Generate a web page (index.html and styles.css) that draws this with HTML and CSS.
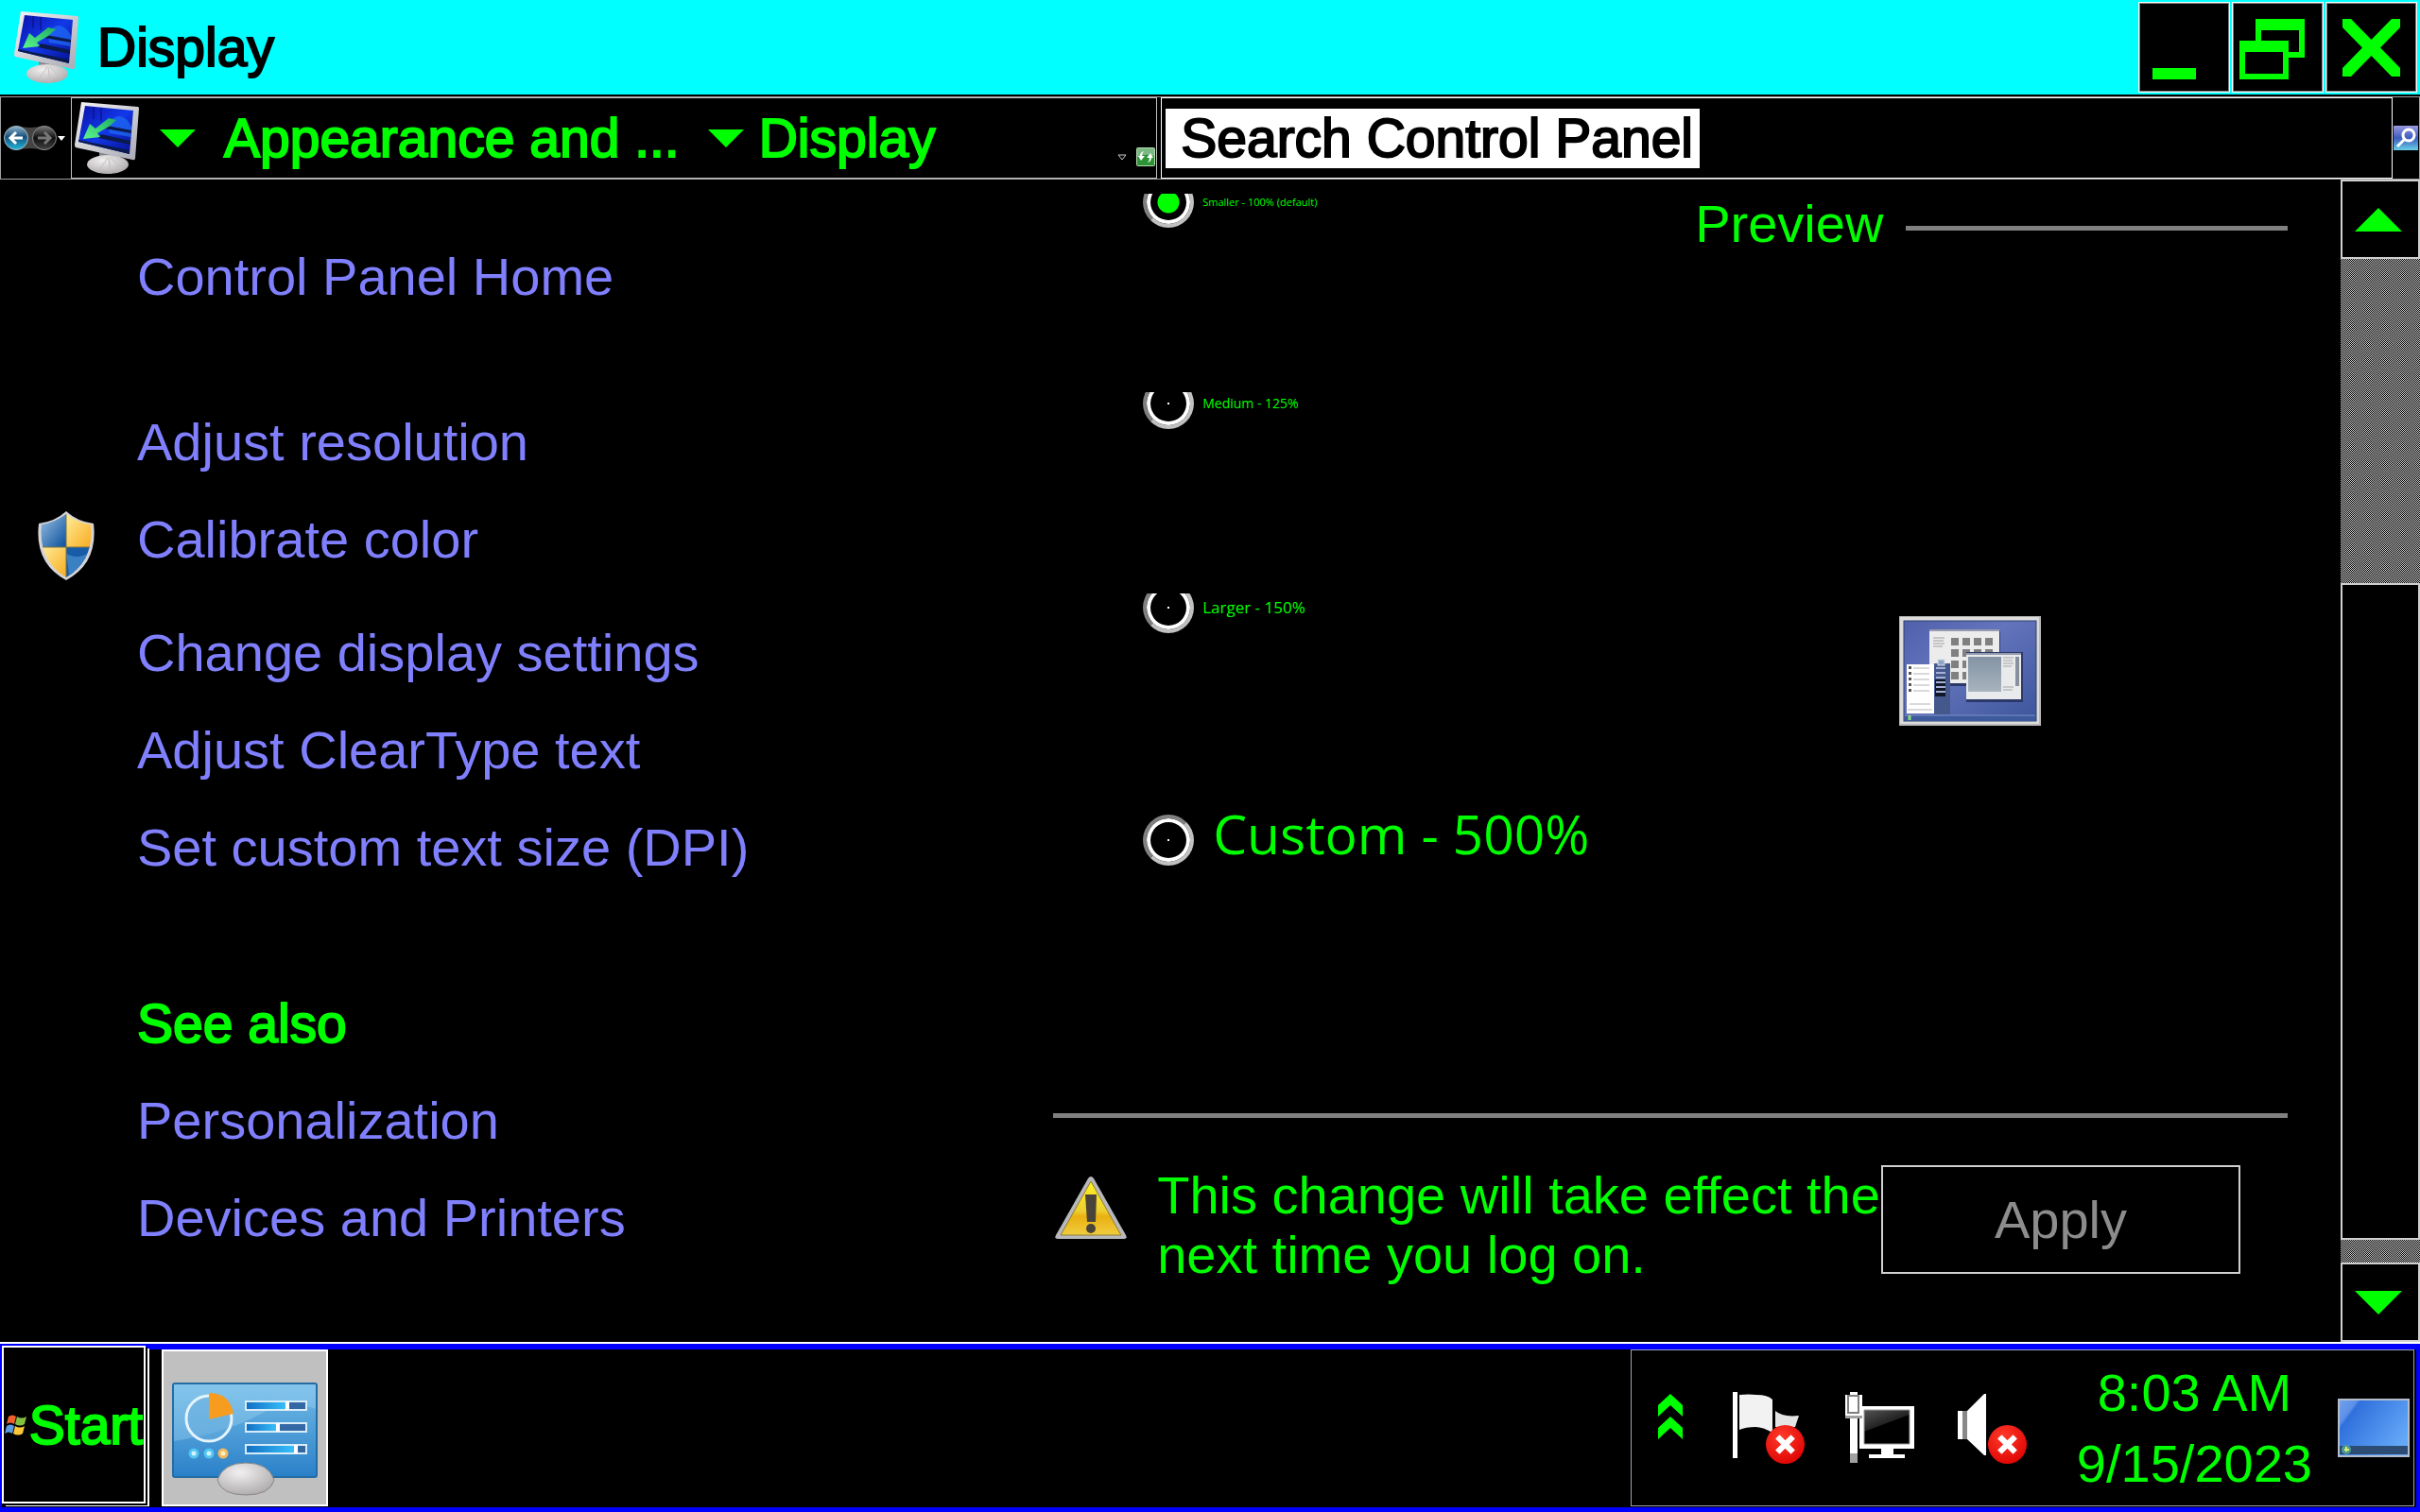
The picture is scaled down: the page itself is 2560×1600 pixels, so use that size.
FILE: index.html
```html
<!DOCTYPE html>
<html lang="en">
  <head>
    <meta charset="UTF-8" />
    <meta name="viewport" content="width=device-width, initial-scale=1.0" />
    <title>Display</title>
    <link rel="stylesheet" href="styles.css">
  </head>
  <body>
    <svg class="sprite" width="0" height="0" aria-hidden="true">
      <defs>
        <linearGradient id="frame" x1="0" y1="0" x2="1" y2="1">
          <stop offset="0" stop-color="#f4f4f6" />
          <stop offset="1" stop-color="#a9a9b4" />
        </linearGradient>
        <linearGradient id="screen" x1="0" y1="0" x2="1" y2="1">
          <stop offset="0" stop-color="#0a12a8" />
          <stop offset="0.5" stop-color="#1238e8" />
          <stop offset="1" stop-color="#06108c" />
        </linearGradient>
        <linearGradient id="arrow" x1="1" y1="0" x2="0" y2="1">
          <stop offset="0" stop-color="#1fae62" />
          <stop offset="1" stop-color="#5cf58c" />
        </linearGradient>
        <radialGradient id="stand" cx="0.4" cy="0.3" r="0.8">
          <stop offset="0" stop-color="#f2f0f0" />
          <stop offset="1" stop-color="#a8a4a6" />
        </radialGradient>
        <radialGradient id="red" cx="0.4" cy="0.3" r="0.8">
          <stop offset="0" stop-color="#ff3a2a" />
          <stop offset="1" stop-color="#dc0000" />
        </radialGradient>
      </defs>
      <symbol id="monitor" viewBox="0 0 68 78">
        <path d="M26 54h20l2 8H26z" fill="#85858e" />
        <ellipse cx="35" cy="67" rx="22" ry="10" fill="url(#stand)" />
        <path d="M35 60l-10 14M36 60l2 17M38 60l12 12" stroke="#c4bfc0" stroke-width="1" />
        <path d="M7 1L67 6Q68 6 68 8L64 61Q63 63 61 62L1 49Q0 48 0 46z" fill="url(#frame)" />
        <path d="M11 5L62 10L58 56L4 43z" fill="url(#screen)" />
        <path d="M36 28q2-12 12-12 9 2 12 12l-1 10-22-4z" fill="#1f6cf5" opacity="0.7" />
        <path d="M34 26l26 5v3l-28-5zM28 35l31 7v4l-34-7zM4 41l54 11v4L4 43z" fill="#0a1a4a" />
        <path d="M20 6v13M28 7v14" stroke="#080c70" stroke-width="1" />
        <path d="M44 20L36 18 22 29 16 24 9 40 27 38 24 34 36 27z" fill="url(#arrow)" />
      </symbol>
      <symbol id="error" viewBox="0 0 40 40">
        <circle cx="20" cy="20" r="20" fill="url(#red)" />
        <path d="M12 12l16 16M28 12L12 28" stroke="#fff" stroke-width="6" />
      </symbol>
      <symbol id="down" viewBox="0 0 38 19">
        <path d="M0 0h38L19 19z" fill="#00ff00" />
      </symbol>
    </svg>

    <header class="titlebar">
      <svg class="monitor"><use href="#monitor" /></svg>
      <h1 class="heavy">Display</h1>
      <div class="controls">
        <button aria-label="Minimize">
          <svg width="68" height="68" viewBox="0 0 68 68"><path d="M0 56h46v12H0z" fill="#00ff00" /></svg>
        </button>
        <button aria-label="Restore">
          <svg width="82" height="68" viewBox="0 0 82 68">
            <path d="M17 4h52v41H46v-6h17V16H23v12h-6z" fill="#00ff00" />
            <path d="M0 27h52v41H0zM6 39v23h40V39z" fill="#00ff00" fill-rule="evenodd" />
          </svg>
        </button>
        <button aria-label="Close">
          <svg width="61" height="61" viewBox="0 0 61 61">
            <path d="M0 0h9l21.500 22L52 0h9v9L40 30.500 61 52v9h-9L30.500 39 9 61H0v-9l21-21.500L0 9z" fill="#00ff00" />
          </svg>
        </button>
      </div>
    </header>

    <nav class="toolbar">
      <div class="travel">
        <button aria-label="Back and forward">
          <svg width="66" height="28" viewBox="0 0 66 28">
            <defs>
              <linearGradient id="back" x1="0" y1="0" x2="0" y2="1">
                <stop offset="0" stop-color="#8fb4cc" />
                <stop offset="0.45" stop-color="#16507c" />
                <stop offset="1" stop-color="#22b8dc" />
              </linearGradient>
              <linearGradient id="forward" x1="0" y1="0" x2="0" y2="1">
                <stop offset="0" stop-color="#777" />
                <stop offset="0.5" stop-color="#111" />
                <stop offset="1" stop-color="#444" />
              </linearGradient>
            </defs>
            <path d="M14 1q14 4 28 0a13 13 0 0 1 0 26q-14-4-28 0z" fill="#444" />
            <circle cx="13" cy="14" r="12.500" fill="url(#back)" stroke="#aebcc6" />
            <circle cx="43" cy="14" r="12.500" fill="url(#forward)" stroke="#888" />
            <path d="M20 14H7M13 8l-6 6 6 6" fill="none" stroke="#fff" stroke-width="3" />
            <path d="M36 14h13M43 8l6 6-6 6" fill="none" stroke="#777" stroke-width="3" />
            <path d="M57 12h8l-4 5z" fill="#fff" />
          </svg>
        </button>
      </div>
      <div class="address">
        <svg class="monitor"><use href="#monitor" /></svg>
        <svg class="arrow"><use href="#down" /></svg>
        <a class="heavy" href="#">Appearance and ...</a>
        <svg class="arrow"><use href="#down" /></svg>
        <a class="heavy" href="#">Display</a>
        <div class="tools">
          <button aria-label="Previous locations">
            <svg width="10" height="7" viewBox="0 0 10 7"><path d="M1 1h8L5 6z" fill="none" stroke="#ccc" /></svg>
          </button>
          <button aria-label="Refresh">
            <svg width="20" height="20" viewBox="0 0 20 20">
              <rect x="0.500" y="0.500" width="19" height="19" rx="1" fill="#2c9434" stroke="#b4dcb0" />
              <path d="M1 1h18v8q-9-3-18 1z" fill="#7cb884" />
              <path d="M8 4q-2 2-2 5h3l-4 5-3-5h2q0-4 4-5zM12 16q2-2 2-5h-3l4-5 3 5h-2q0 4-4 5z" fill="#fff" />
            </svg>
          </button>
        </div>
      </div>
      <form class="search">
        <input class="heavy" type="text" value="Search Control Panel" aria-label="Search Control Panel" spellcheck="false" />
      </form>
      <button class="find" aria-label="Search">
        <svg width="26" height="26" viewBox="0 0 26 26">
          <defs>
            <linearGradient id="glass" x1="0" y1="0" x2="0" y2="1">
              <stop offset="0" stop-color="#9a9ae0" />
              <stop offset="0.5" stop-color="#3c5cc0" />
              <stop offset="1" stop-color="#68d0e8" />
            </linearGradient>
          </defs>
          <rect width="26" height="26" fill="url(#glass)" />
          <circle cx="16" cy="10" r="6" fill="none" stroke="#fff" stroke-width="3" />
          <path d="M12 14l-8 8" stroke="#fff" stroke-width="3" />
        </svg>
      </button>
    </nav>

    <main class="window">
      <aside class="sidebar">
        <a class="home" href="#">Control Panel Home</a>
        <a href="#">Adjust resolution</a>
        <a class="admin" href="#">
          <svg class="shield" width="60" height="74" viewBox="0 0 60 74">
            <defs>
              <clipPath id="shield">
                <path d="M30 3Q42 12 56 14Q60 52 30 70Q0 52 4 14Q18 12 30 3z" />
              </clipPath>
              <linearGradient id="blue" x1="0" y1="0" x2="1" y2="1">
                <stop offset="0" stop-color="#a8cdea" />
                <stop offset="1" stop-color="#0b4f9c" />
              </linearGradient>
              <linearGradient id="gold" x1="0" y1="0" x2="1" y2="1">
                <stop offset="0" stop-color="#fff0a0" />
                <stop offset="1" stop-color="#f8a818" />
              </linearGradient>
            </defs>
            <path d="M30 0Q42 11 59 13Q64 55 30 73Q-4 55 1 13Q18 11 30 0z" fill="#d4d4d8" />
            <g clip-path="url(#shield)">
              <path d="M0 0h30v38H0z" fill="url(#blue)" />
              <path d="M30 0h30v38H30z" fill="url(#gold)" />
              <path d="M0 38h30v36H0z" fill="url(#gold)" />
              <path d="M30 38h30v36H30z" fill="#185ca8" />
              <path d="M30 45q14 8 28-4v12L34 72z" fill="#3c80c4" />
              <path d="M30 0v74M0 38h60" stroke="#7a7440" stroke-width="1" />
            </g>
          </svg>
          Calibrate color
        </a>
        <a href="#">Change display settings</a>
        <a href="#">Adjust ClearType text</a>
        <a href="#">Set custom text size (DPI)</a>
        <h2 class="heavy">See also</h2>
        <a href="#">Personalization</a>
        <a href="#">Devices and Printers</a>
      </aside>

      <section class="panel">
        <div class="settings">
          <div class="options">
            <label class="option smaller">
              <input type="radio" name="size" checked />
              <span>Smaller - 100% (default)</span>
            </label>
            <label class="option medium">
              <input type="radio" name="size" />
              <span>Medium - 125%</span>
            </label>
            <label class="option larger">
              <input type="radio" name="size" />
              <span>Larger - 150%</span>
            </label>
            <label class="option custom">
              <input type="radio" name="size" />
              <span>Custom - 500%</span>
            </label>
          </div>
          <div class="preview">
            <h2>Preview</h2>
            <svg width="150" height="116" viewBox="0 0 150 116" role="img" aria-label="Desktop preview">
              <defs>
                <linearGradient id="desk" x1="0" y1="0" x2="1" y2="1">
                  <stop offset="0" stop-color="#5060ac" />
                  <stop offset="0.4" stop-color="#6474bc" />
                  <stop offset="1" stop-color="#3c559c" />
                </linearGradient>
                <linearGradient id="pane" x1="0" y1="0" x2="0" y2="1">
                  <stop offset="0" stop-color="#8494a4" />
                  <stop offset="1" stop-color="#a8b4be" />
                </linearGradient>
              </defs>
              <rect width="150" height="116" fill="#b8b8b8" />
              <rect x="1" y="1" width="147" height="113" fill="#dcdcdc" />
              <rect x="5" y="5" width="140" height="106" fill="url(#desk)" stroke="#30406c" />
              <rect x="32" y="16" width="75" height="58" fill="#2c3868" />
              <rect x="32" y="14" width="74" height="57" fill="#ececec" />
              <path d="M32 15h74" stroke="#444c70" stroke-width="1" />
              <path d="M36 23h12M36 26h11M36 29h12M36 32h10" stroke="#a0a0a0" />
              <path d="M55 23h8v8h-8zM67 23h8v8h-8zM79 23h8v8h-8zM91 23h8v8h-8zM55 35h8v8h-8zM67 35h8v8h-8zM79 35h8v8h-8zM91 35h8v8h-8zM55 47h8v8h-8zM67 47h8v8h-8zM55 59h8v8h-8zM67 59h8v8h-8z" fill="#808080" />
              <rect x="71" y="38" width="60" height="53" fill="#2c3868" />
              <rect x="71" y="39" width="58" height="49" fill="#e8eaec" />
              <path d="M71 40h58" stroke="#444c70" />
              <rect x="73" y="43" width="35" height="37" fill="url(#pane)" />
              <path d="M110 44h11M110 47h10M110 50h11M110 53h9M110 75h11M110 78h10" stroke="#a4a4a4" />
              <rect x="123" y="43" width="4" height="31" fill="#8890a0" />
              <rect x="37" y="50" width="17" height="54" fill="#44588c" />
              <path d="M38 67h11v18H38z" fill="#101828" />
              <path d="M39 55h10M39 60h10M39 65h10M39 70h10M39 75h10M39 80h10" stroke="#a4b0d4" stroke-width="2" />
              <rect x="41" y="46" width="7" height="6" fill="#90a4c4" stroke="#d4dce8" />
              <rect x="8" y="51" width="29" height="52" fill="#fff" />
              <path d="M10 53h3v3h-3zM10 59h3v3h-3zM10 65h3v3h-3zM10 71h3v3h-3zM10 77h3v3h-3z" fill="#555" />
              <path d="M15 55h17M15 61h17M15 67h17M15 73h17M15 79h17M11 93h22M9 99h26" stroke="#b4b4b4" />
              <rect x="6" y="105" width="138" height="6" fill="#3c5a9c" />
              <path d="M6 105h138" stroke="#7c90c4" />
              <path d="M11 105v5" stroke="#8cdc74" stroke-width="3" />
            </svg>
          </div>
        </div>
        <footer class="notice">
          <svg width="76" height="66" viewBox="0 0 76 66">
            <defs>
              <linearGradient id="warn" x1="0" y1="0" x2="0" y2="1">
                <stop offset="0" stop-color="#fff020" />
                <stop offset="0.55" stop-color="#ecd030" />
                <stop offset="0.65" stop-color="#eab010" />
                <stop offset="1" stop-color="#f0cc40" />
              </linearGradient>
            </defs>
            <path d="M35 2q3-4 6 0l34 60q2 4-2 4H3q-4 0-2-4z" fill="#b8b8bc" />
            <path d="M38 5l32 57H6z" fill="url(#warn)" stroke="#8c7c30" stroke-width="1" />
            <path d="M32 19h12l-1 29h-9z" fill="#4a4438" />
            <circle cx="38" cy="55" r="5" fill="#4a4438" />
          </svg>
          <p>This change will take effect the<br />next time you log on.</p>
          <button disabled>Apply</button>
        </footer>
      </section>

      <div class="scrollbar">
        <button aria-label="Scroll up">
          <svg width="50" height="25" viewBox="0 0 50 25"><path d="M25 0l25 25H0z" fill="#00ff00" /></svg>
        </button>
        <div class="track">
          <div class="thumb"></div>
        </div>
        <button aria-label="Scroll down">
          <svg width="50" height="25" viewBox="0 0 50 25"><path d="M0 0h50L25 25z" fill="#00ff00" /></svg>
        </button>
      </div>
    </main>

    <div class="taskbar">
      <button class="start heavy">
        <svg width="24" height="22" viewBox="0 0 24 22">
          <path d="M4 2q4-3 8 0l-2 8q-4-3-8 0z" fill="#f0602c" />
          <path d="M13 2q5 3 10 0l-2 8q-5 3-10 0z" fill="#84c040" />
          <path d="M2 12q4-3 8 0l-2 8q-4-3-8 0z" fill="#5c9ce4" />
          <path d="M11 12q5 3 10 0l-2 8q-5 3-10 0z" fill="#fcc838" />
        </svg>
        Start
      </button>
      <button class="task" aria-label="Control Panel">
        <svg width="154" height="120" viewBox="0 0 154 120">
          <defs>
            <linearGradient id="board" x1="0" y1="0" x2="0" y2="1">
              <stop offset="0" stop-color="#74bce8" />
              <stop offset="1" stop-color="#2a80c8" />
            </linearGradient>
            <linearGradient id="bar" x1="0" y1="0" x2="1" y2="0">
              <stop offset="0" stop-color="#1270c4" />
              <stop offset="1" stop-color="#38c0fc" />
            </linearGradient>
          </defs>
          <rect x="1" y="1" width="152" height="99" rx="2" fill="url(#board)" stroke="#246ca4" stroke-width="2" />
          <path d="M2 62Q60 52 92 34T152 28V2H2z" fill="#a4d8f4" opacity="0.350" />
          <circle cx="39" cy="38" r="24" fill="#68b0e0" fill-opacity="0.500" stroke="#e4f4fc" stroke-width="3" />
          <path d="M39 39V11q22 0 26 22z" fill="#f89c20" />
          <g stroke="#d8ecf8" stroke-width="2" fill="#3468a4">
            <rect x="78" y="20" width="64" height="9" />
            <rect x="78" y="43" width="64" height="9" />
            <rect x="78" y="66" width="64" height="9" />
          </g>
          <g fill="url(#bar)">
            <rect x="79" y="21" width="42" height="7" />
            <rect x="79" y="44" width="32" height="7" />
            <rect x="79" y="67" width="50" height="7" />
          </g>
          <path d="M122 20v9M112 43v9M131 66v9" stroke="#fff" stroke-width="4" />
          <g fill="#d0f4fc" stroke="#54c4f0" stroke-width="3">
            <circle cx="23" cy="75" r="4" />
            <circle cx="39" cy="75" r="4" />
            <circle cx="54" cy="75" r="4" fill="#fff0c0" stroke="#f4b860" />
          </g>
          <path d="M48 103Q54 85 78 85T108 103Q104 119 78 119T48 103z" fill="url(#stand)" stroke="#888" stroke-width="1" />
        </svg>
      </button>
      <div class="tray">
        <button aria-label="Show hidden icons">
          <svg width="26" height="48" viewBox="0 0 26 48">
            <path d="M13 0l13 12v12L13 12 0 24V12zM13 24l13 12v12L13 36 0 48V36z" fill="#00ff00" />
          </svg>
        </button>
        <button aria-label="Action Center">
          <svg width="76" height="76" viewBox="0 0 76 76">
            <path d="M0 0h5v70H0z" fill="#fff" />
            <path d="M7 3q10-1 18 0 12 0 17 5v35q-10-6-18-6-10 0-17 3z" fill="#f2f2f2" />
            <path d="M45 20q8 7 25 5l-4 12H45z" fill="#e4e4e4" />
            <use href="#error" x="35" y="35" width="41" height="41" />
          </svg>
        </button>
        <button aria-label="Network">
          <svg width="76" height="76" viewBox="0 0 76 76">
            <defs>
              <linearGradient id="lcd" x1="0" y1="0" x2="0.500" y2="1">
                <stop offset="0" stop-color="#555" />
                <stop offset="0.5" stop-color="#222" />
                <stop offset="0.52" stop-color="#000" />
              </linearGradient>
            </defs>
            <path d="M15 15h58v45H15z" fill="#fff" />
            <path d="M20 19h48v36H20z" fill="url(#lcd)" stroke="#999" />
            <path d="M38 60h13v6h12v4H25v-4h13z" fill="#fff" />
            <path d="M5 0h8v3h5v24H0V3h5z" fill="#fff" />
            <path d="M3 4h11v18H3z" fill="#fff" stroke="#808080" stroke-width="2" />
            <path d="M5 28h8v37H5z" fill="#fff" />
            <path d="M0 25h18v3H0zM5 65h8v10H5z" fill="#a0a0a0" />
          </svg>
        </button>
        <button aria-label="Volume">
          <svg width="76" height="76" viewBox="0 0 76 76">
            <path d="M0 20h6v30H0zM10 20L28 2h2v65h-2L10 50z" fill="#fff" />
            <path d="M5 20h5v30H5z" fill="#888" />
            <use href="#error" x="32" y="35" width="41" height="41" />
          </svg>
        </button>
        <time>8:03 AM<br />9/15/2023</time>
        <button aria-label="Show desktop">
          <svg width="76" height="62" viewBox="0 0 76 62">
            <defs>
              <linearGradient id="wall" x1="0" y1="0" x2="1" y2="0.600">
                <stop offset="0" stop-color="#74a4ec" />
                <stop offset="0.2" stop-color="#5c90e8" />
                <stop offset="0.24" stop-color="#3070dc" />
                <stop offset="1" stop-color="#64a8f8" />
              </linearGradient>
            </defs>
            <rect x="1" y="1" width="74" height="60" fill="url(#wall)" stroke="#b4bccc" stroke-width="2" />
            <path d="M2 50h72v9H2z" fill="#2c4c74" />
            <circle cx="9" cy="54" r="5" fill="#4c9c94" />
            <path d="M7 54h5M9 51v5" stroke="#d8ec80" stroke-width="2" />
          </svg>
        </button>
      </div>
    </div>
  </body>
</html>
```

FILE: styles.css
```css
* {
  margin: 0;
  padding: 0;
  box-sizing: border-box;
}
body {
  display: flex;
  flex-direction: column;
  min-height: 100vh;
  background: #000;
  color: #00ff00;
  font-family: "Liberation Sans", Arial, sans-serif;
  font-size: 56px;
  line-height: 64px;
}
button {
  display: flex;
  align-items: center;
  justify-content: center;
  border: 0;
  background: #000;
  color: inherit;
  font: inherit;
}
svg {
  display: block;
  flex-shrink: 0;
}
a {
  color: #8080ff;
  text-decoration: none;
}
h1,
h2 {
  font-size: 56px;
  font-weight: 400;
}
.sprite {
  position: absolute;
}
.heavy {
  font-size: 57px;
  -webkit-text-stroke: 2px currentColor;
}
.monitor {
  width: 68px;
  height: 78px;
}

/* title bar */
.titlebar {
  display: flex;
  align-items: center;
  height: 100px;
  padding-left: 15px;
  padding-right: 3px;
  background: #00ffff;
  color: #000;
}
.titlebar h1 {
  flex: 1;
  margin-left: 20px;
}
.controls {
  display: flex;
  gap: 2px;
}
.controls button {
  width: 97px;
  height: 96px;
  border: 1px solid #fff;
  box-shadow: inset 0 0 0 1px #808080;
}

/* address bar */
.toolbar {
  display: flex;
  height: 88px;
  margin-top: 2px;
  border: 1px solid #a0a0a0;
}
.travel {
  display: flex;
  align-items: center;
  width: 74px;
  padding-left: 3px;
}
.address,
.search {
  display: flex;
  align-items: center;
  border: 1px solid #c0c0c0;
}
.address {
  flex: 15;
  padding-left: 3px;
}
.address a {
  margin-left: 10px;
  color: #00ff00;
}
.arrow {
  width: 38px;
  height: 19px;
  margin: 0 20px 0 22px;
}
.address .arrow ~ .arrow {
  margin: 0 6px 0 30px;
}
.tools {
  display: flex;
  align-items: center;
  align-self: flex-end;
  gap: 10px;
  margin-left: auto;
  padding: 0 1px 12px 0;
}
.search {
  flex: 17;
  margin-left: 4px;
  padding-left: 4px;
  border-color: #fff;
}
.search input {
  width: 565px;
  height: 63px;
  padding-left: 16px;
  border: 0;
  outline: 0;
  background: #fff;
  color: #000;
  font-family: inherit;
}
.find {
  width: 28px;
}

/* window */
.window {
  display: grid;
  grid-template-columns: 9fr 11fr 84px;
  flex: 1;
  border-bottom: 2px solid #fff;
}
.sidebar {
  display: flex;
  flex-direction: column;
  gap: 39px;
  padding: 71px 0 37px 145px;
}
.home {
  margin-bottom: 72px;
}
.admin {
  display: flex;
  min-height: 81px;
  margin-left: -105px;
}
.shield {
  margin-top: 2px;
  margin-right: 45px;
}
.sidebar h2 {
  margin-top: 83px;
}
.panel {
  display: flex;
  flex-direction: column;
  padding-right: 56px;
}
.settings {
  display: grid;
  grid-template-columns: 13fr 12fr;
  flex: 1;
  padding-top: 15px;
}
.options {
  padding-left: 95px;
  font-family: "Open Sans", "Noto Sans", sans-serif;
}

/* the upper part of the first three buttons is cut off */
.option {
  display: flex;
  align-items: flex-end;
  gap: 9px;
  margin-bottom: 174px;
  overflow: hidden;
  line-height: 54px;
}
.option input {
  appearance: none;
  flex-shrink: 0;
  width: 54px;
  height: 54px;
  border: 4px solid;
  border-color: #808080 #c0c0c0 #c0c0c0 #808080;
  border-radius: 50%;
  background: radial-gradient(circle, #fff 1px, #000 1px);
  box-shadow: inset 0 0 0 4px #fff;
}
.option input:checked {
  background: radial-gradient(circle, #00ff00 11px, #000 12px);
}
.smaller {
  height: 36px;
  font-size: 11px;
}
.medium {
  height: 39px;
  font-size: 14px;
}
.larger {
  height: 42px;
  margin-bottom: 192px;
  font-size: 17px;
}
.custom {
  height: 54px;
  gap: 20px;
  margin-bottom: 0;
  overflow: visible;
  font-size: 57px;
}
.custom span {
  padding-bottom: 7px;
}
.preview {
  display: flex;
  flex-direction: column;
  align-items: center;
}
.preview h2 {
  display: flex;
  align-items: center;
  align-self: stretch;
  gap: 24px;
}
.preview h2::after {
  content: "";
  flex: 1;
  height: 5px;
  margin-top: 9px;
  background: #808080;
}
.preview svg {
  margin-top: 383px;
  margin-right: 45px;
}
.notice {
  display: flex;
  align-items: flex-start;
  height: 242px;
  padding-top: 50px;
  border-top: 5px solid #808080;
}
.notice svg {
  margin: 12px 32px 0 2px;
}
.notice p {
  flex: 1;
  min-width: 0;
  line-height: 63px;
  white-space: nowrap;
}
.notice button {
  width: 380px;
  height: 115px;
  margin-right: 50px;
  border: 2px solid #d0d0d0;
  color: #8c8c8c;
}
.scrollbar {
  display: flex;
  flex-direction: column;
}
.scrollbar button {
  height: 84px;
  padding-right: 5px;
  border: 2px solid #d0d0d0;
}
.track {
  display: flex;
  flex: 1;
  flex-direction: column;
  padding-bottom: 24px;
  background: repeating-conic-gradient(#000 0 25%, #d0d0d0 0 50%) 0 0 / 2px 2px;
}
.thumb {
  height: 67%;
  margin-top: auto;
  border: 2px solid #d0d0d0;
  background: #000;
}

/* taskbar */
.taskbar {
  display: flex;
  height: 178px;
  padding-bottom: 1px;
  border: solid #0000ff;
  border-width: 6px 4px 5px 2px;
}
.start {
  gap: 2px;
  width: 152px;
  margin-top: -4px;
  margin-bottom: 3px;
  border: 2px solid #fff;
  box-shadow: 2px 2px 0 #000, 4px 3px 0 #fff;
}
.task {
  width: 176px;
  margin-left: 17px;
  border: 2px solid #fff;
  background: #c0c0c0;
}
.task svg {
  margin-top: 24px;
}
.tray {
  display: flex;
  align-items: center;
  margin-left: auto;
  margin-right: 2px;
  padding-left: 28px;
  padding-right: 4px;
  border: 1px solid #a0a0b4;
}
.tray button {
  margin-right: 43px;
}
.tray button:first-child {
  margin-right: 53px;
  padding-bottom: 24px;
}
.tray time {
  margin-left: 7px;
  margin-right: 27px;
  line-height: 75px;
  text-align: center;
}
.tray button:last-child {
  margin-right: 0;
}
```
